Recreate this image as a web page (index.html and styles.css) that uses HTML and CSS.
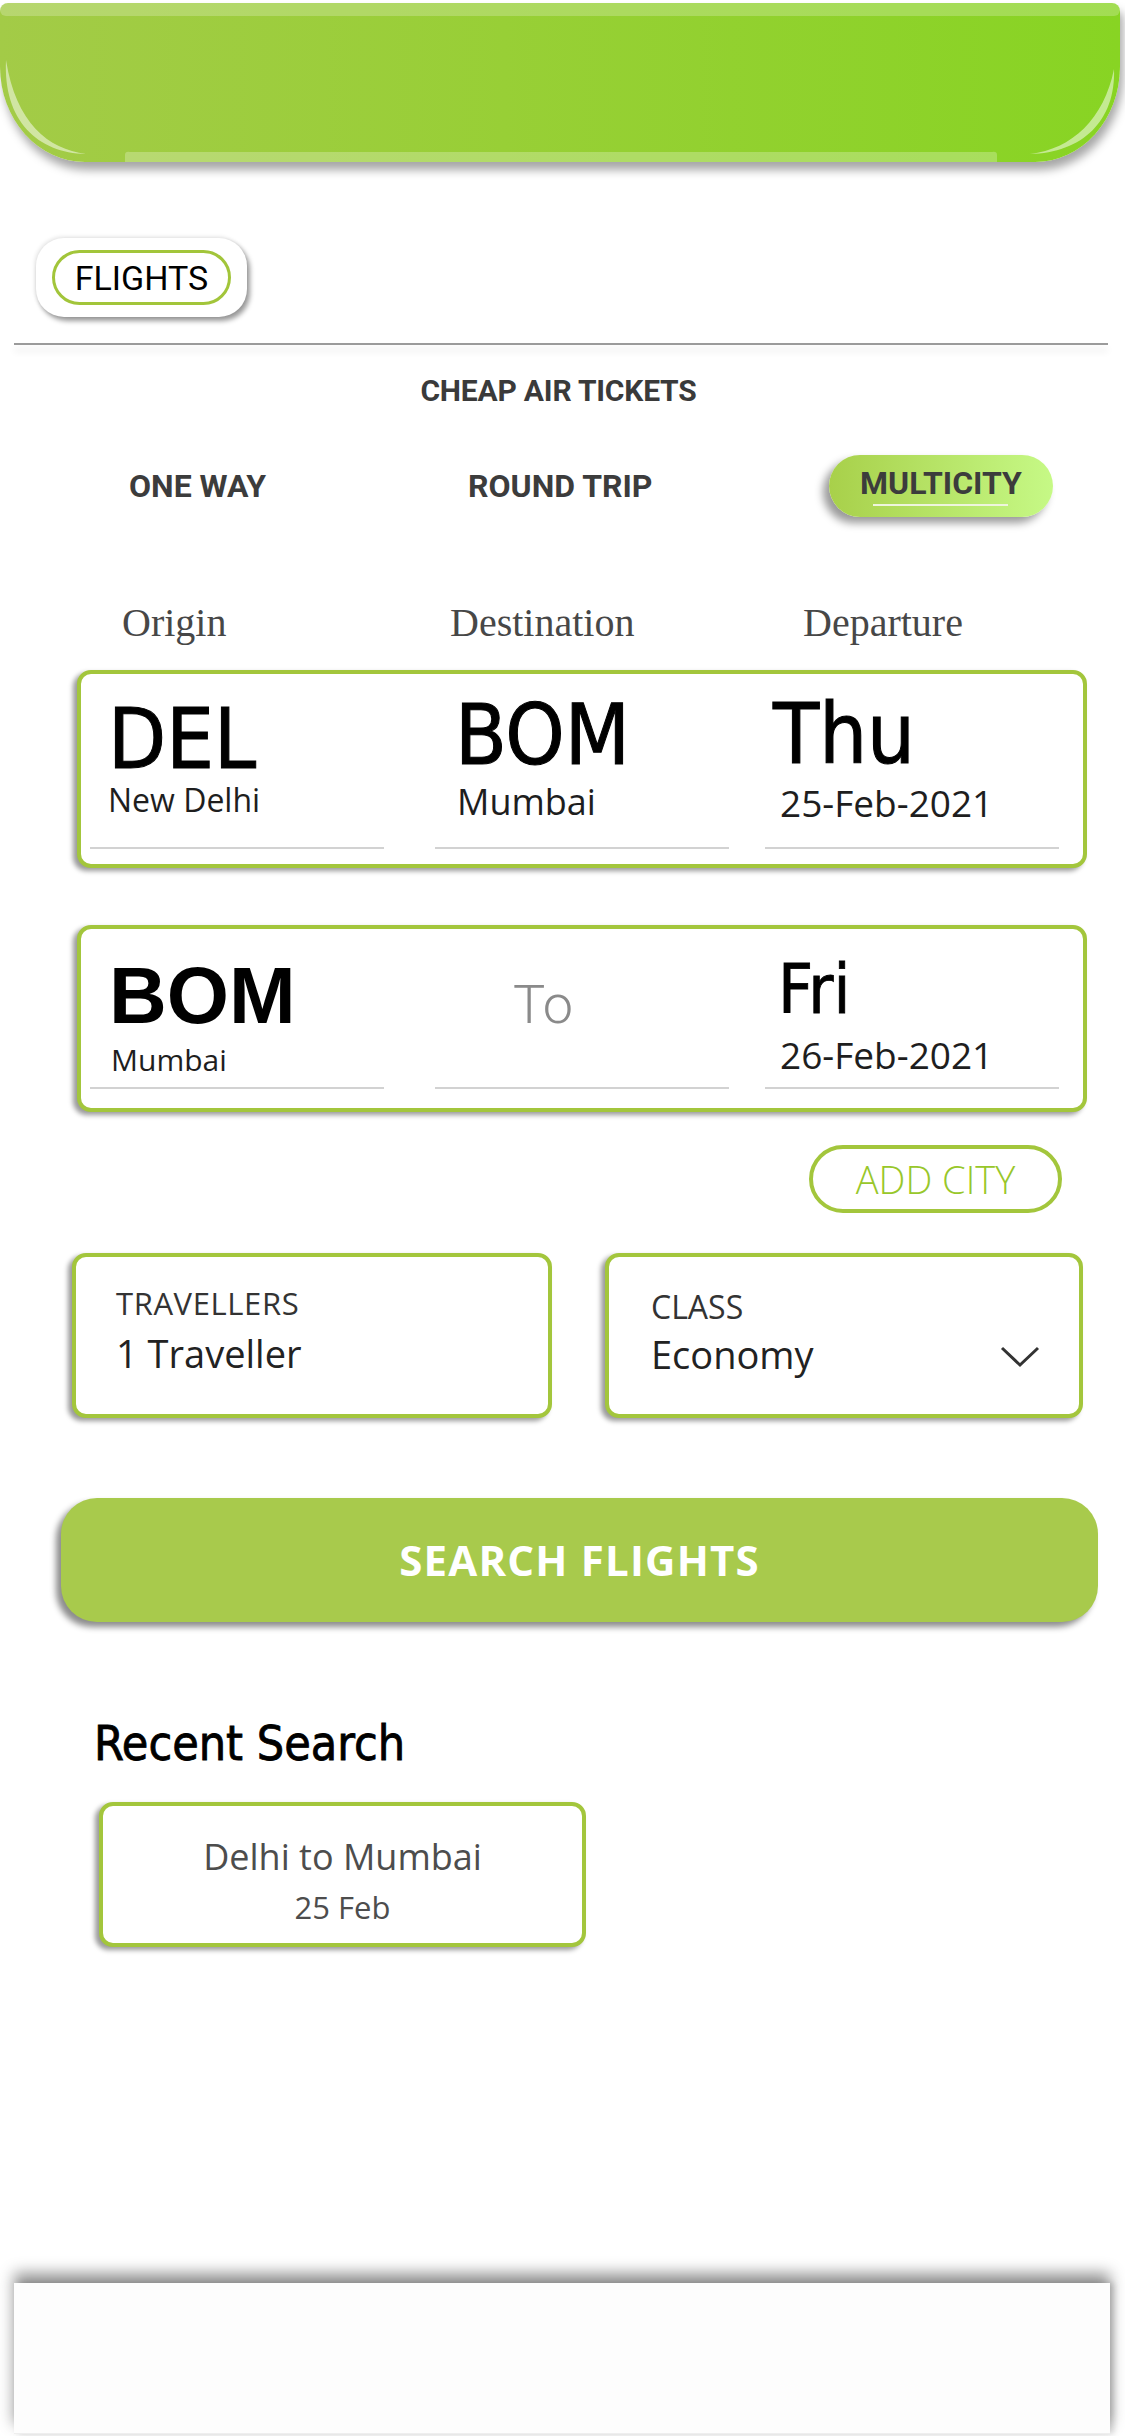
FILE: index.html
```html
<!DOCTYPE html>
<html lang="en">
<head>
<meta charset="utf-8">
<title>Flights</title>
<link rel="stylesheet" href="styles.css">
</head>
<body>
<header class="topbar">
  <svg class="topbar-gloss" width="1120" height="159" viewBox="0 0 1120 159" aria-hidden="true">
    <rect x="0" y="0" width="1120" height="13" rx="6" fill="#fff" fill-opacity=".22"/>
    <path d="M6 57 C3 118 38 150 86 151 C48 146 16 120 6 57 Z" fill="#fff" fill-opacity=".5"/>
    <path d="M1114 66 C1116 118 1082 150 1030 151 C1072 146 1104 116 1114 66 Z" fill="#fff" fill-opacity=".5"/>
    <path d="M125 159 L125 152 Q125 148 130 149 L992 149 Q997 148 997 152 L997 159 Z" fill="#fff" fill-opacity=".25"/>
  </svg>
</header>

<main class="page">
  <div class="chip-row">
    <div class="chip-card"><span class="chip">FLIGHTS</span></div>
  </div>
  <div class="divider"></div>

  <h1 class="title">CHEAP AIR TICKETS</h1>

  <nav class="trip-tabs">
    <span class="trip-tab">ONE WAY</span>
    <span class="trip-tab">ROUND TRIP</span>
    <span class="trip-tab active"><span class="active-label">MULTICITY</span></span>
  </nav>

  <div class="field-labels">
    <span>Origin</span>
    <span>Destination</span>
    <span>Departure</span>
  </div>

  <section class="leg leg-1">
    <div class="leg-col">
      <div class="code c1-code">DEL</div>
      <div class="city c1-city">New Delhi</div>
      <div class="rule"></div>
    </div>
    <div class="leg-col">
      <div class="code c2-code">BOM</div>
      <div class="city c2-city">Mumbai</div>
      <div class="rule"></div>
    </div>
    <div class="leg-col">
      <div class="code c3-code">Thu</div>
      <div class="city c3-city">25-Feb-2021</div>
      <div class="rule"></div>
    </div>
  </section>

  <section class="leg leg-2">
    <div class="leg-col">
      <div class="code-bold">BOM</div>
      <div class="city l2-city">Mumbai</div>
      <div class="rule"></div>
    </div>
    <div class="leg-col">
      <div class="to-placeholder">To</div>
      <div class="rule"></div>
    </div>
    <div class="leg-col">
      <div class="code l2-day">Fri</div>
      <div class="city l2-date">26-Feb-2021</div>
      <div class="rule"></div>
    </div>
  </section>

  <div class="add-row">
    <span class="add-city">ADD CITY</span>
  </div>

  <div class="selectors">
    <div class="select-box travellers">
      <div class="select-label">TRAVELLERS</div>
      <div class="select-value">1 Traveller</div>
    </div>
    <div class="select-box cabin">
      <div class="select-label">CLASS</div>
      <div class="select-value-row">
        <span class="select-value">Economy</span>
        <svg class="chevron" width="40" height="22" viewBox="0 0 40 22" aria-hidden="true">
          <path d="M2 2 L20 19 L38 2" fill="none" stroke="#333" stroke-width="3"/>
        </svg>
      </div>
    </div>
  </div>

  <div class="search-btn">SEARCH FLIGHTS</div>

  <h2 class="recent-title">Recent Search</h2>
  <div class="recent-card">
    <div class="recent-route">Delhi to Mumbai</div>
    <div class="recent-date">25 Feb</div>
  </div>
</main>

<footer class="bottom-bar"></footer>
</body>
</html>
```

FILE: styles.css
```css
html, body {
  margin: 0;
  padding: 0;
}

body {
  width: 1125px;
  height: 2436px;
  overflow: hidden;
  background: #ffffff;
  font-family: Roboto, "Liberation Sans", sans-serif;
  color: #000;
}

/* ---------- top bar ---------- */
.topbar {
  position: relative;
  margin-top: 3px;
  width: 1120px;
  height: 159px;
  background: linear-gradient(90deg, #a3cb47 0%, #98cf36 45%, #88d423 100%);
  border-radius: 8px 8px 85px 85px / 8px 8px 95px 95px;
  box-shadow: 3px 8px 10px rgba(0, 0, 0, 0.35);
}

.topbar-gloss {
  position: absolute;
  left: 0;
  top: 0;
}

/* ---------- flights chip ---------- */
.chip-row {
  display: flex;
  margin-top: 76px;
  padding-left: 36px;
}

.chip-card {
  padding: 12px 16px;
  border-radius: 28px;
  background: #fff;
  box-shadow: 3px 4px 5px rgba(0, 0, 0, 0.4), -1px -1px 4px rgba(0, 0, 0, 0.12);
}

.chip {
  display: flex;
  align-items: center;
  justify-content: center;
  box-sizing: border-box;
  width: 179px;
  height: 55px;
  border: 3px solid #a2c53a;
  border-radius: 28px;
  font: 400 34px/1 Roboto, sans-serif;
  color: #000;
}

.divider {
  margin: 26px 0 0 14px;
  width: 1094px;
  height: 2px;
  background: #9b9b9b;
  box-shadow: 0 6px 7px rgba(0, 0, 0, 0.12);
}

.title {
  margin: 31px 0 0;
  padding-right: 8px;
  text-align: center;
  font: 700 30px/30px Roboto, sans-serif;
  color: #3a3a3a;
  letter-spacing: -0.2px;
}

/* ---------- trip tabs ---------- */
.trip-tabs {
  display: grid;
  grid-template-columns: 339px 361px auto;
  align-items: center;
  height: 62px;
  margin-top: 49px;
  padding-left: 129px;
}

.trip-tab {
  font: 700 32px/32px Roboto, sans-serif;
  color: #3c3c3c;
}

.trip-tab.active {
  justify-self: start;
  display: flex;
  justify-content: center;
  box-sizing: border-box;
  width: 224px;
  height: 62px;
  padding-top: 12px;
  border-radius: 31px;
  background: linear-gradient(90deg, #a8d04a 0%, #c6f986 100%);
  box-shadow: -6px 6px 8px rgba(0, 0, 0, 0.4);
}

.active-label {
  display: block;
}

.active-label::after {
  content: "";
  display: block;
  height: 2px;
  margin: 5px 14px 0 13px;
  background: #eef5dc;
}

/* ---------- field labels ---------- */
.field-labels {
  display: grid;
  grid-template-columns: 328px 353px auto;
  margin-top: 86px;
  padding-left: 122px;
  font: 400 40px/40px "Liberation Serif", serif;
  color: #474747;
}

/* ---------- legs ---------- */
.leg {
  display: grid;
  grid-template-columns: 345px 330px 294px;
  box-sizing: border-box;
  width: 1010px;
  margin-left: 77px;
  border: 4px solid #a3c63c;
  border-radius: 14px;
  background: #fff;
  box-shadow: -4px 3px 5px rgba(0, 0, 0, 0.4);
}

.leg-1 {
  margin-top: 27px;
  padding: 18px 0 15px 9px;
}

.leg-2 {
  margin-top: 57px;
  padding: 27px 0 19px 9px;
}

.leg-1 .leg-col {
  height: 157px;
}

.leg-2 .leg-col {
  height: 133px;
}

.leg-col {
  display: flex;
  flex-direction: column;
}

.rule {
  margin-top: auto;
  width: 294px;
  height: 2px;
  background: #d2d2d2;
}

.code {
  font: 400 84px/84px "DejaVu Sans Condensed", "DejaVu Sans", sans-serif;
  font-stretch: condensed;
  color: #000;
  -webkit-text-stroke: 1px #000;
}

.city {
  font-family: "Open Sans", sans-serif;
  color: #1e1e1e;
}

.c1-code { margin-top: 5px; padding-left: 18px; }
.c2-code { margin-top: 1px; padding-left: 20px; }
.c3-code { margin-top: 0; padding-left: 8px; }

.c1-city { margin-top: 3px; padding-left: 18px; font-size: 32px; line-height: 32px; }
.c2-city { margin-top: 7px; padding-left: 22px; font-size: 36px; line-height: 36px; }
.c3-city { margin-top: 8px; padding-left: 15px; font-size: 37px; line-height: 37px; }

.code-bold {
  padding-left: 19px;
  font: 700 80px/80px "Liberation Sans", Arial, sans-serif;
  color: #000;
}

.l2-city {
  margin-top: 9px;
  padding-left: 21px;
  font-size: 30px;
  line-height: 30px;
}

.to-placeholder {
  margin-top: 22px;
  padding-left: 78px;
  font: 300 54px/54px Roboto, sans-serif;
  color: #8a8a8a;
}

.l2-day {
  padding-left: 13px;
  font-size: 68px;
  line-height: 68px;
  -webkit-text-stroke: 0.8px #000;
}

.l2-date {
  margin-top: 12px;
  padding-left: 15px;
  font-size: 37px;
  line-height: 37px;
}

/* ---------- add city ---------- */
.add-row {
  display: flex;
  justify-content: flex-end;
  margin-top: 33px;
  padding-right: 63px;
}

.add-city {
  display: flex;
  align-items: center;
  justify-content: center;
  box-sizing: border-box;
  width: 253px;
  height: 68px;
  border: 4px solid #a3c63c;
  border-radius: 34px;
  font: 300 38px/1 "Open Sans", sans-serif;
  color: #98c72a;
}

/* ---------- selectors ---------- */
.selectors {
  display: grid;
  grid-template-columns: 480px 478px;
  column-gap: 53px;
  margin-top: 40px;
  padding-left: 72px;
}

.select-box {
  box-sizing: border-box;
  height: 165px;
  border: 4px solid #a3c63c;
  border-radius: 14px;
  background: #fff;
  box-shadow: -4px 3px 5px rgba(0, 0, 0, 0.4);
  font-family: "Open Sans", sans-serif;
}

.travellers {
  padding: 31px 0 0 40px;
}

.cabin {
  padding: 34px 39px 0 42px;
}

.select-label {
  font-size: 31px;
  line-height: 31px;
  letter-spacing: 0.6px;
  color: #333;
}

.cabin .select-label {
  font-size: 32px;
  line-height: 32px;
  letter-spacing: 0;
}

.select-value {
  display: block;
  margin-top: 15px;
  font-size: 38px;
  line-height: 38px;
  color: #222;
}

.select-value-row {
  display: flex;
  align-items: center;
  justify-content: space-between;
  margin-top: 12px;
}

.select-value-row .select-value {
  margin-top: 0;
}

.chevron {
  margin-top: 6px;
}

/* ---------- search ---------- */
.search-btn {
  display: flex;
  align-items: center;
  justify-content: center;
  width: 1037px;
  height: 124px;
  margin: 80px 0 0 61px;
  border-radius: 36px;
  background: #a8ca4c;
  box-shadow: -5px 5px 6px rgba(0, 0, 0, 0.45);
  font: 700 42px/1 "Open Sans", sans-serif;
  letter-spacing: 1.2px;
  color: #fff;
}

/* ---------- recent ---------- */
.recent-title {
  margin: 97px 0 0 94px;
  font: 400 48px/48px "DejaVu Sans Condensed", "DejaVu Sans", sans-serif;
  font-stretch: condensed;
  color: #000;
  -webkit-text-stroke: 0.8px #000;
}

.recent-card {
  box-sizing: border-box;
  width: 487px;
  height: 145px;
  margin: 35px 0 0 99px;
  padding-top: 33px;
  border: 4px solid #a3c63c;
  border-radius: 14px;
  background: #fff;
  box-shadow: -4px 3px 5px rgba(0, 0, 0, 0.4);
  text-align: center;
  font-family: "Open Sans", sans-serif;
  color: #4d4d4d;
}

.recent-route {
  font-size: 36px;
  line-height: 36px;
}

.recent-date {
  margin-top: 17px;
  font-size: 31px;
  line-height: 31px;
}

/* ---------- bottom bar ---------- */
.bottom-bar {
  width: 1096px;
  height: 150px;
  margin: 336px 0 0 14px;
  background: #fdfdfd;
  box-shadow: 0 -10px 14px rgba(0, 0, 0, 0.42), 4px 0 6px rgba(0, 0, 0, 0.15);
  border-bottom: 1px solid #eeeeee;
}
```
